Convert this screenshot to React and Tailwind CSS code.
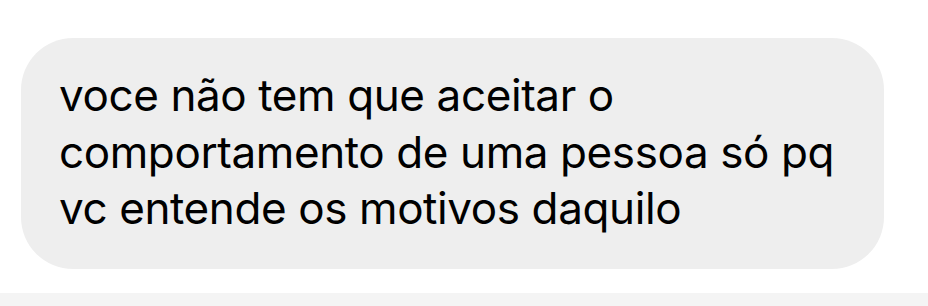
import React from 'react';

const App = () => {
  return (
    <div className="w-[928px] h-[306px] bg-white flex flex-col overflow-hidden">
      <div className="flex-1 pt-[38px] pl-[21px]">
        <div className="w-[863px] h-[231px] bg-[#eeeeee] rounded-[52px] pl-[38px] pt-[29px]">
          <p
            className="text-[44px] leading-[56.5px] text-black tracking-[-0.4px]"
            style={{ fontFamily: 'Inter, "Liberation Sans", sans-serif' }}
          >
            voce não tem que aceitar o<br />
            comportamento de uma pessoa só pq<br />
            vc entende os motivos daquilo
          </p>
        </div>
      </div>
      <div className="h-[13px] bg-[#f4f4f4]" />
    </div>
  );
};

export default App;
